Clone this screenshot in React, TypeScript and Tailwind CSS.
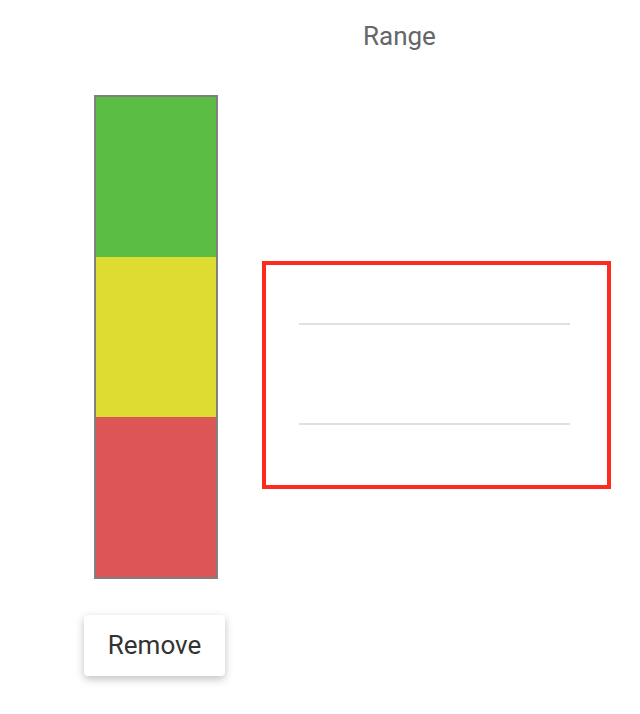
export default function App() {
  return (
    <div className="relative h-[714px] w-[640px] bg-white font-['Roboto',sans-serif]">
      <div className="pt-[17px] pl-[363px] text-[26px] leading-[38px] text-[#666]">Range</div>
      <div className="mt-[40px] flex items-start">
        <div className="ml-[84px] flex w-[141px] flex-col items-start">
          <div className="ml-[10px] flex w-[124px] flex-col border-2 border-[#808080]">
            <div className="h-[160px] bg-[#5cbd45]" />
            <div className="h-[160px] bg-[#dfdc31]" />
            <div className="h-[160px] bg-[#dc5656]" />
          </div>
          <button className="mt-[36px] h-[61px] w-[141px] rounded-[4px] bg-white text-[26px] text-[#333] shadow-[0_3px_8px_rgba(0,0,0,0.25)]">
            Remove
          </button>
        </div>
        <div className="ml-[37px] mt-[166px] flex h-[228px] w-[349px] flex-col border-4 border-[#ff2a1f] pl-[33px] pr-[37px] pt-[58px]">
          <div className="h-[2px] bg-[#e0e0e0]" />
          <div className="mt-[98px] h-[2px] bg-[#e0e0e0]" />
        </div>
      </div>
    </div>
  );
}
